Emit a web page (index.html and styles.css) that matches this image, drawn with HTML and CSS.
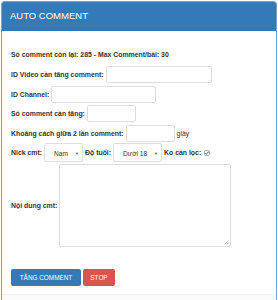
FILE: index.html
```html
<!DOCTYPE html>
<html lang="vi">
<head>
  <meta charset="UTF-8" />
  <meta name="viewport" content="width=device-width, initial-scale=1.0" />
  <title>Auto Comment</title>
  <link rel="stylesheet" href="styles.css">
</head>
<body>
  <div class="panel">
    <div class="panel-heading">AUTO COMMENT</div>
    <div class="panel-body">
      <p class="info">Số comment còn lại: 285 - Max Comment/bài: 30</p>
      <div class="row">
        <label>ID Video cần tăng comment:</label>
        <input type="text" class="in-video">
      </div>
      <div class="row">
        <label>ID Channel:</label>
        <input type="text" class="in-channel">
      </div>
      <div class="row">
        <label>Số comment cần tăng:</label>
        <input type="text" class="in-small">
      </div>
      <div class="row">
        <label>Khoảng cách giữa 2 lần comment:</label>
        <input type="text" class="in-small">
        <span class="unit">giây</span>
      </div>
      <div class="row">
        <label>Nick cmt:</label>
        <div class="select sel-nick">Nam<span class="caret">▼</span></div>
        <label>Độ tuổi:</label>
        <div class="select sel-age">Dưới 18<span class="caret">▼</span></div>
        <label>Ko cần lọc:</label>
        <svg class="check" width="6" height="6" viewBox="0 0 6 6">
          <rect x="0.5" y="0.5" width="5" height="5" rx="1" fill="#fff" stroke="#aaa"/>
          <path d="M1.3 3.1 L2.5 4.3 L4.7 1.5" fill="none" stroke="#555" stroke-width="0.9"/>
        </svg>
      </div>
      <div class="row row-text">
        <label>Nội dung cmt:</label>
        <div class="textarea">
          <svg class="grip" width="5" height="5" viewBox="0 0 5 5">
            <path d="M4.5 0.5 L0.5 4.5 M4.5 2.5 L2.5 4.5" stroke="#999" stroke-width="0.7"/>
          </svg>
        </div>
      </div>
      <div class="buttons">
        <button class="btn btn-primary">TĂNG COMMENT</button>
        <button class="btn btn-danger">STOP</button>
      </div>
    </div>
    <div class="panel-footer"></div>
  </div>
</body>
</html>
```

FILE: styles.css
```css
body { margin: 0; padding: 1px 1px 0 1px; background: #fff; font-family: "Liberation Sans", Arial, sans-serif; color: #333; }
.panel { border: 1px solid #7fa5cc; border-radius: 3px; background: #fff; overflow: hidden; }
.panel-heading { background: #337ab7; color: #fff; height: 30px; line-height: 30px; padding: 0 9px; font-size: 9.5px; margin: -1px -1px 0 -1px; border-radius: 3px 3px 0 0; }
.panel-body { padding: 19px 9px 8px 9px; }
.info { margin: 0 0 6px 0; font-size: 6.9px; font-weight: bold; line-height: 10px; }
.row { display: flex; align-items: center; height: 17px; margin-bottom: 2.6px; font-size: 6.9px; font-weight: bold; }
.row label { margin-right: 2px; white-space: nowrap; }
.row input { height: 17px; box-sizing: border-box; border: 1px solid #ddd; border-radius: 2px; margin: 0; padding: 0; background: #fff; }
.in-video { width: 106px; }
.in-channel { width: 105px; }
.in-small { width: 49px; }
.unit { font-weight: normal; margin-left: 2px; }
.select { position: relative; height: 19px; line-height: 19px; box-sizing: border-box; border: 1px solid #ddd; border-radius: 2px; font-weight: normal; font-size: 6.6px; padding-left: 9px; margin-right: 2px; }
.sel-nick { width: 39px; }
.sel-age { width: 49px; }
.caret { position: absolute; right: 3px; top: 0; font-size: 4px; color: #555; }
.check { margin-left: 1px; }
.row-text { height: 83px; margin-bottom: 22px; }
.textarea { position: relative; width: 172px; height: 83px; box-sizing: border-box; border: 1px solid #ddd; border-radius: 2px; }
.grip { position: absolute; right: 1px; bottom: 1px; }
.buttons { display: flex; gap: 2px; }
.btn { height: 17px; border: none; border-radius: 2px; color: #fff; font-family: "Liberation Sans", Arial, sans-serif; font-size: 6.4px; padding: 0 6px; margin: 0; }
.btn-primary { background: #337ab7; width: 70px; }
.btn-danger { background: #d9534f; width: 32px; }
.panel-footer { height: 7px; background: #fafafa; border-top: 1px solid #eee; }
```
